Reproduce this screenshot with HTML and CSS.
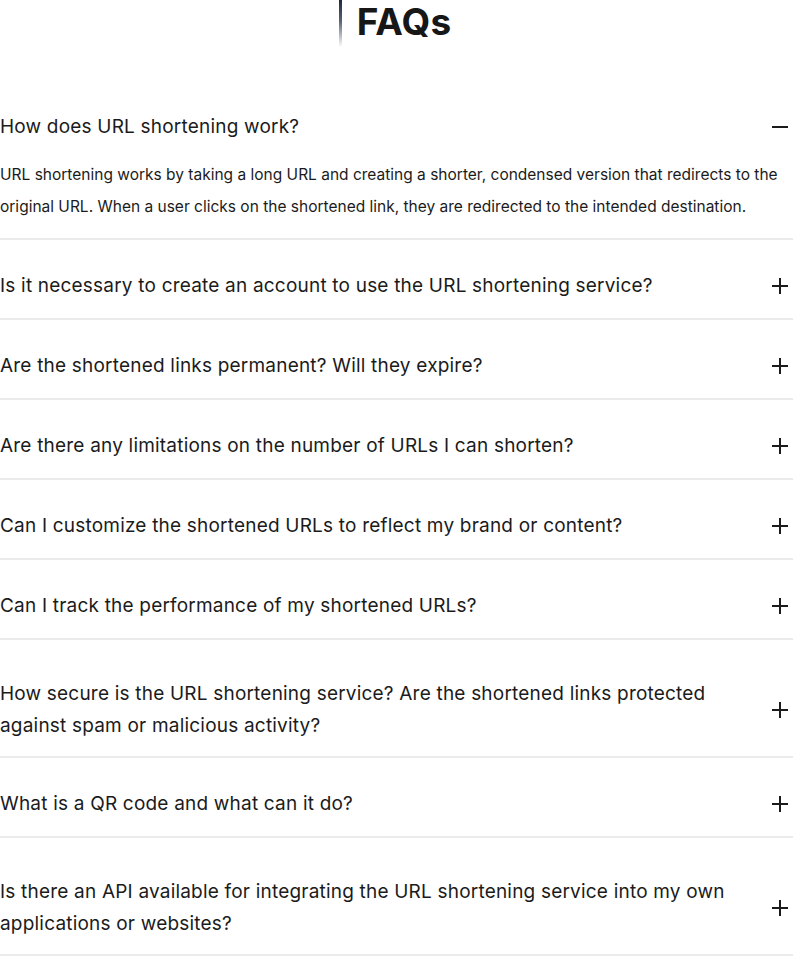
FILE: index.html
```html
<!DOCTYPE html>
<html lang="en">
<head>
<meta charset="utf-8">
<title>FAQs</title>
<link rel="stylesheet" href="styles.css">
</head>
<body>
<section class="faq">
  <header class="faq-head">
    <span class="faq-bar"></span>
    <h1 class="faq-title">FAQs</h1>
  </header>
  <div class="faq-list">
    <div class="faq-item faq-item--open">
      <div class="faq-q">
        <span class="faq-q-text">How does URL shortening work?</span>
        <svg class="faq-icon" viewBox="0 0 16 16" width="16" height="16"><path d="M0 8H16" stroke="currentColor" stroke-width="2"/></svg>
      </div>
      <p class="faq-a">URL shortening works by taking a long URL and creating a shorter, condensed version that redirects to the original URL. When a user clicks on the shortened link, they are redirected to the intended destination.</p>
    </div>
    <div class="faq-item">
      <div class="faq-q">
        <span class="faq-q-text">Is it necessary to create an account to use the URL shortening service?</span>
        <svg class="faq-icon" viewBox="0 0 16 16" width="16" height="16"><path d="M0 8H16M8 0V16" stroke="currentColor" stroke-width="2"/></svg>
      </div>
    </div>
    <div class="faq-item">
      <div class="faq-q">
        <span class="faq-q-text">Are the shortened links permanent? Will they expire?</span>
        <svg class="faq-icon" viewBox="0 0 16 16" width="16" height="16"><path d="M0 8H16M8 0V16" stroke="currentColor" stroke-width="2"/></svg>
      </div>
    </div>
    <div class="faq-item">
      <div class="faq-q">
        <span class="faq-q-text">Are there any limitations on the number of URLs I can shorten?</span>
        <svg class="faq-icon" viewBox="0 0 16 16" width="16" height="16"><path d="M0 8H16M8 0V16" stroke="currentColor" stroke-width="2"/></svg>
      </div>
    </div>
    <div class="faq-item">
      <div class="faq-q">
        <span class="faq-q-text">Can I customize the shortened URLs to reflect my brand or content?</span>
        <svg class="faq-icon" viewBox="0 0 16 16" width="16" height="16"><path d="M0 8H16M8 0V16" stroke="currentColor" stroke-width="2"/></svg>
      </div>
    </div>
    <div class="faq-item">
      <div class="faq-q">
        <span class="faq-q-text">Can I track the performance of my shortened URLs?</span>
        <svg class="faq-icon" viewBox="0 0 16 16" width="16" height="16"><path d="M0 8H16M8 0V16" stroke="currentColor" stroke-width="2"/></svg>
      </div>
    </div>
    <div class="faq-item faq-item--tall">
      <div class="faq-q">
        <span class="faq-q-text">How secure is the URL shortening service? Are the shortened links protected against spam or malicious activity?</span>
        <svg class="faq-icon" viewBox="0 0 16 16" width="16" height="16"><path d="M0 8H16M8 0V16" stroke="currentColor" stroke-width="2"/></svg>
      </div>
    </div>
    <div class="faq-item">
      <div class="faq-q">
        <span class="faq-q-text">What is a QR code and what can it do?</span>
        <svg class="faq-icon" viewBox="0 0 16 16" width="16" height="16"><path d="M0 8H16M8 0V16" stroke="currentColor" stroke-width="2"/></svg>
      </div>
    </div>
    <div class="faq-item faq-item--tall">
      <div class="faq-q">
        <span class="faq-q-text">Is there an API available for integrating the URL shortening service into my own applications or websites?</span>
        <svg class="faq-icon" viewBox="0 0 16 16" width="16" height="16"><path d="M0 8H16M8 0V16" stroke="currentColor" stroke-width="2"/></svg>
      </div>
    </div>
  </div>
</section>
</body>
</html>
```
FILE: styles.css
```css
* { box-sizing: border-box; }
html, body { margin: 0; padding: 0; background: #ffffff; }
body {
  font-family: "Inter", "Noto Sans", sans-serif;
  color: #1b1b1b;
}
.faq { width: 793px; }
.faq-head {
  display: flex;
  justify-content: center;
  align-items: flex-start;
  gap: 15px;
  height: 47px;
  padding-right: 3px;
}
.faq-bar {
  width: 3px;
  height: 47px;
  background: linear-gradient(to bottom, #1d2740 0%, #5a6478 45%, rgba(200,205,215,0) 100%);
}
.faq-title {
  margin: 0;
  font-size: 37px;
  line-height: 44px;
  font-weight: 700;
  color: #171717;
  letter-spacing: 0.2px;
}
.faq-list { margin-top: 64px; }
.faq-item {
  border-bottom: 2px solid #ebebeb;
  padding: 30px 0 16px;
}
.faq-item--open { padding: 0 0 15px; }
.faq-item--tall { padding: 38px 0 14px; }
.faq-q {
  display: flex;
  align-items: center;
  justify-content: space-between;
  gap: 40px;
  padding-right: 5px;
}
.faq-q-text {
  font-size: 19px;
  font-weight: 400;
  letter-spacing: 0.2px;
  line-height: 32px;
  max-width: 730px;
}
.faq-icon { flex: none; color: #1b1b1b; }
.faq-a {
  margin: 16px 0 0;
  font-size: 15.5px;
  line-height: 32px;
  font-weight: 400;
  padding-right: 10px;
}
```
